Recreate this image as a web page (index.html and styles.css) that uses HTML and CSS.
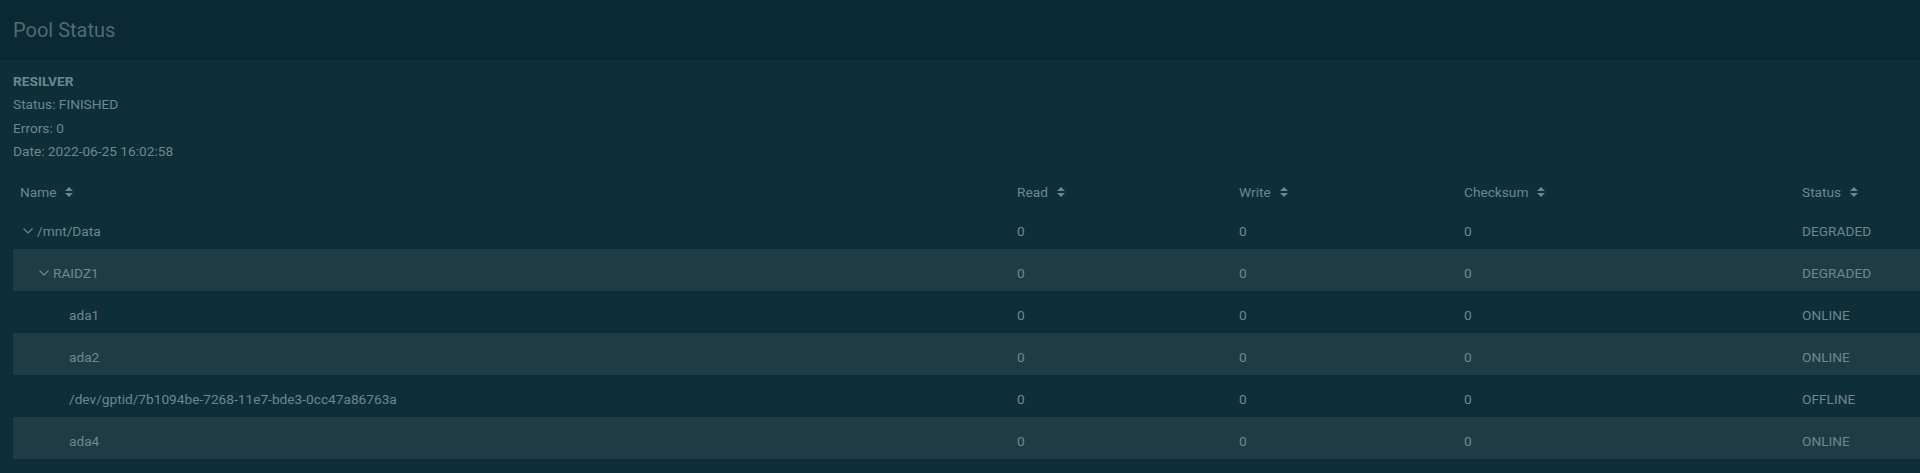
FILE: index.html
```html
<!DOCTYPE html>
<html>
<head>
<meta charset="utf-8">
<link rel="stylesheet" href="styles.css">
</head>
<body>
<div class="page">
  <div class="header"><h1 class="title">Pool Status</h1></div>
  <div class="content">
    <div class="scan">
      <div class="scan-title">RESILVER</div>
      <div class="scan-line">Status: FINISHED</div>
      <div class="scan-line">Errors: 0</div>
      <div class="scan-line">Date: 2022-06-25 16:02:58</div>
    </div>
    <div class="table">
      <div class="row head">
        <div class="cell c-name">Name <svg class="sort" viewBox="0 0 8 10"><path d="M4 0 L8 4 H0 Z M0 6 H8 L4 10 Z"/></svg></div>
        <div class="cell">Read <svg class="sort" viewBox="0 0 8 10"><path d="M4 0 L8 4 H0 Z M0 6 H8 L4 10 Z"/></svg></div>
        <div class="cell">Write <svg class="sort" viewBox="0 0 8 10"><path d="M4 0 L8 4 H0 Z M0 6 H8 L4 10 Z"/></svg></div>
        <div class="cell">Checksum <svg class="sort" viewBox="0 0 8 10"><path d="M4 0 L8 4 H0 Z M0 6 H8 L4 10 Z"/></svg></div>
        <div class="cell">Status <svg class="sort" viewBox="0 0 8 10"><path d="M4 0 L8 4 H0 Z M0 6 H8 L4 10 Z"/></svg></div>
      </div>
      <div class="row">
        <div class="cell c-name lvl0"><span class="toggle"><svg viewBox="0 0 10 6"><path d="M0.5 0.5 L5 5 L9.5 0.5"/></svg></span>/mnt/Data</div>
        <div class="cell">0</div><div class="cell">0</div><div class="cell">0</div><div class="cell">DEGRADED</div>
      </div>
      <div class="row alt">
        <div class="cell c-name lvl1"><span class="toggle"><svg viewBox="0 0 10 6"><path d="M0.5 0.5 L5 5 L9.5 0.5"/></svg></span>RAIDZ1</div>
        <div class="cell">0</div><div class="cell">0</div><div class="cell">0</div><div class="cell">DEGRADED</div>
      </div>
      <div class="row">
        <div class="cell c-name lvl2"><span class="toggle"></span>ada1</div>
        <div class="cell">0</div><div class="cell">0</div><div class="cell">0</div><div class="cell">ONLINE</div>
      </div>
      <div class="row alt">
        <div class="cell c-name lvl2"><span class="toggle"></span>ada2</div>
        <div class="cell">0</div><div class="cell">0</div><div class="cell">0</div><div class="cell">ONLINE</div>
      </div>
      <div class="row">
        <div class="cell c-name lvl2"><span class="toggle"></span>/dev/gptid/7b1094be-7268-11e7-bde3-0cc47a86763a</div>
        <div class="cell">0</div><div class="cell">0</div><div class="cell">0</div><div class="cell">OFFLINE</div>
      </div>
      <div class="row alt">
        <div class="cell c-name lvl2"><span class="toggle"></span>ada4</div>
        <div class="cell">0</div><div class="cell">0</div><div class="cell">0</div><div class="cell">ONLINE</div>
      </div>
    </div>
  </div>
</div>
</body>
</html>
```

FILE: styles.css
```css
* { box-sizing: border-box; }
html, body {
  margin: 0;
  padding: 0;
  background: #0e2e3a;
  font-family: Roboto, "Liberation Sans", sans-serif;
  color: #6e878f;
  overflow: hidden;
}
.page {
  width: 1920px;
  height: 473px;
  background: #0e2e3a;
}
.header {
  height: 60px;
  background: #0a2934;
  display: flex;
  align-items: center;
  padding-left: 13px;
}
.title {
  margin: 0;
  font-size: 20px;
  font-weight: 400;
  color: #4f6b75;
}
.content {
  padding: 10px 0 0 13px;
}
.scan {
  font-size: 13.7px;
  line-height: 23.3px;
}
.scan-title {
  font-weight: 700;
}
.table {
  margin-top: 8px;
  font-size: 13.7px;
}
.row {
  display: grid;
  grid-template-columns: 997px 222px 225px 338px 1fr;
  height: 42px;
  align-items: center;
  padding-top: 5px;
}
.row.head {
  height: 36px;
  padding-top: 5px;
}
.row.alt {
  background: #1f3c46;
}
.cell {
  padding-left: 7px;
  display: flex;
  align-items: center;
  white-space: nowrap;
}
.sort {
  width: 8px;
  height: 10px;
  margin-left: 9px;
  fill: #6e878f;
}
.c-name.lvl0 { padding-left: 8px; }
.c-name.lvl1 { padding-left: 24px; }
.c-name.lvl2 { padding-left: 40px; }
.toggle {
  width: 16px;
  height: 10px;
  display: inline-flex;
  align-items: center;
}
.toggle svg {
  width: 10px;
  height: 6px;
  margin-left: 2px;
  fill: none;
  stroke: #6e878f;
  stroke-width: 1.2;
}
```
